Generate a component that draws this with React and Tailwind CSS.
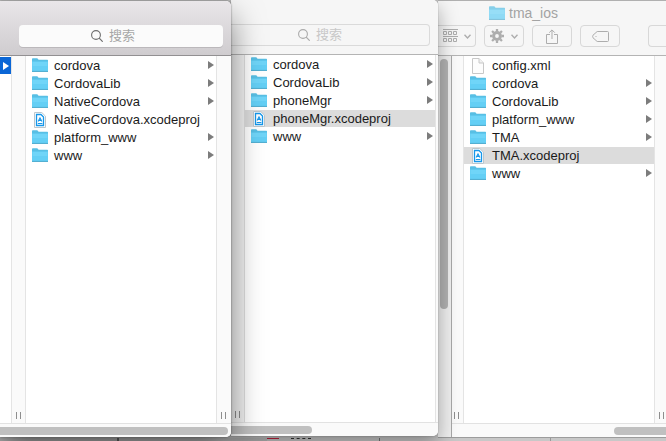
import React from "react";

function FolderIcon({ faded }) {
  return (
    <svg className={faded ? "h-[14px] w-4 shrink-0 opacity-70" : "mb-px h-[14px] w-4 shrink-0"} viewBox="0 0 16 14" aria-hidden="true">
      <path d="M0 1Q0 .3 .8 .3H5.3L6.6 1.8H15.4Q16 1.8 16 2.4V13.5H0Z" fill="#58bfe4" />
      <path d="M0 3.4H16V13H0Z" fill="#64cff5" />
      <path d="M.6 4H15.4V8H.6Z" fill="#70d5f8" />
      <path d="M0 13.4H16" stroke="#4aa9cd" strokeWidth="1" />
    </svg>
  );
}

function ProjectIcon() {
  return (
    <svg className="h-4 w-4 shrink-0" viewBox="0 0 16 16" aria-hidden="true">
      <path d="M2.5.5H9.8L13.5 4.2V15.5H2.5Z" fill="#fff" stroke="#bcc6cc" />
      <path d="M4.5 2.5H9L11.5 5V13.5H4.5Z" fill="#fff" stroke="#1697ea" strokeWidth="1.3" />
      <path d="M5.8 11.5H10.4" stroke="#1697ea" strokeWidth="1" />
      <path d="M6.1 9.5L8 5.9L9.9 9.5M6.6 8.4H9.5" fill="none" stroke="#1697ea" strokeWidth="1.1" />
    </svg>
  );
}

function PageIcon() {
  return (
    <svg className="h-4 w-4 shrink-0" viewBox="0 0 16 16" aria-hidden="true">
      <path d="M2.5.5H9L13.5 5V15.5H2.5Z" fill="#fdfdfd" stroke="#c8c8c8" />
      <path d="M9 .5V5H13.5" fill="#f2f2f2" stroke="#c8c8c8" />
    </svg>
  );
}

function Arrow({ className }) {
  return (
    <svg className={className} viewBox="0 0 6 8" aria-hidden="true">
      <path d="M0 0L6 4L0 8Z" fill="currentColor" />
    </svg>
  );
}

function FileList({ label, items, selected }) {
  return (
    <ul aria-label={label} className="w-[190px] shrink-0 pt-px">
      {items.map((name) => {
        const project = name.endsWith(".xcodeproj");
        const page = name.endsWith(".xml");
        return (
          <li key={name} className="h-[18px]">
            <button
              type="button"
              className={
                "flex h-[17px] w-full items-center pr-0.5 pl-1.5 text-left text-[13px] leading-[17px] whitespace-nowrap text-[#1a1a1a] " +
                (name === selected ? "bg-[#dcdcdc]" : "")
              }
            >
              {project ? <ProjectIcon /> : page ? <PageIcon /> : <FolderIcon />}
              <span className="ml-1.5 flex-1">{name}</span>
              {!project && !page && <Arrow className="mb-px h-2 w-1.5 text-[#7c7c7c]" />}
            </button>
          </li>
        );
      })}
    </ul>
  );
}

function Divider({ className }) {
  return (
    <div className={"flex shrink-0 items-end gap-[3px] pb-1 " + className}>
      <span className="h-[7px] w-px bg-[#8e8e8e]" />
      <span className="h-[7px] w-px bg-[#8e8e8e]" />
    </div>
  );
}

function Search({ className }) {
  return (
    <label className={"flex h-[22px] items-center gap-1.5 " + className}>
      <svg className="h-3 w-3 shrink-0" viewBox="0 0 12 12" fill="none" stroke="currentColor" aria-hidden="true">
        <circle cx="5" cy="5" r="4.4" strokeWidth="1.1" />
        <path d="M8.2 8.2L11.7 11.7" strokeWidth="1.2" />
      </svg>
      <input
        type="text"
        aria-label="搜索"
        placeholder="搜索"
        className="w-0 min-w-0 flex-1 bg-transparent text-[13px] leading-5 outline-none placeholder:text-inherit placeholder:opacity-60"
      />
    </label>
  );
}

function ToolButton({ label, className, children }) {
  return (
    <button
      type="button"
      aria-label={label}
      className={"flex h-[22px] shrink-0 items-center justify-center rounded border border-[#d8d8d8] text-[#adadad] " + className}
    >
      {children}
    </button>
  );
}

function Chevron() {
  return (
    <svg className="h-[5px] w-[7px]" viewBox="0 0 7 5" fill="none" stroke="currentColor" strokeWidth="1.4" aria-hidden="true">
      <path d="M.5 .7L3.5 3.9L6.5 .7" />
    </svg>
  );
}

function Gear() {
  return (
    <svg className="h-[14px] w-[14px]" viewBox="0 0 14 14" fill="none" stroke="currentColor" aria-hidden="true">
      <circle cx="7" cy="7" r="3.4" strokeWidth="3" />
      <path d="M7 0V2.5M7 11.5V14M0 7H2.5M11.5 7H14M2.05 2.05L3.8 3.8M10.2 10.2L11.95 11.95M2.05 11.95L3.8 10.2M10.2 3.8L11.95 2.05" strokeWidth="2.3" />
    </svg>
  );
}

export default function App() {
  return (
    <div className="flex h-screen flex-col overflow-hidden bg-[#c4c4c4] font-['Liberation_Sans','Noto_Sans_CJK_SC',sans-serif]">
      <main className="relative z-10 flex min-h-0 flex-1">
        <section
          aria-label="NativeCordova"
          className="z-20 mt-px mb-px flex w-[231px] shrink-0 flex-col rounded-r-[5px] bg-white shadow-[0_16px_32px_rgba(0,0,0,0.5),0_0_2px_rgba(0,0,0,0.55)]"
        >
          <header className="h-[55px] shrink-0 rounded-tr-[5px] border-b border-[#929092] bg-linear-to-b from-[#e9e6e9] to-[#cfcccf] pt-6 pr-2 pl-[19px]">
            <Search className="rounded bg-[#fbfbfb] pl-[72px] text-[#6e6e6e] shadow-[0_1px_0_#bbb8bb]" />
          </header>
          <div className="flex min-h-0 flex-1">
            <div className="w-[11px] shrink-0 pt-px">
              <div className="flex h-[17px] items-center bg-[#0a66d6] pl-[3px]">
                <Arrow className="h-2 w-1.5 text-white" />
              </div>
            </div>
            <Divider className="w-[15px] border-x border-[#e4e4e4] bg-[#fafafa] pl-1" />
            <FileList
              label="NativeCordova"
              items={["cordova", "CordovaLib", "NativeCordova", "NativeCordova.xcodeproj", "platform_www", "www"]}
            />
            <Divider className="flex-1 border-l border-[#e4e4e4] bg-[#fafafa] pl-1" />
          </div>
          <div className="h-[14px] shrink-0 rounded-br-[5px] border-t border-[#e2e2e2] bg-[#fafafa] pt-[3px] pr-[3px]">
            <div className="h-2 rounded-r-full bg-[#c0c0c0]" />
          </div>
        </section>

        <section
          aria-label="phoneMgr"
          className="z-10 mb-0.5 flex w-[207px] shrink-0 flex-col rounded-r-[5px] bg-white shadow-[0_8px_20px_rgba(0,0,0,0.34),0_0_1px_rgba(0,0,0,0.6)]"
        >
          <header className="h-[55px] shrink-0 rounded-tr-[5px] border-b border-[#b4b4b4] bg-[#f6f6f6] pt-6 pr-2">
            <Search className="rounded-r border border-l-0 border-[#dadada] pl-[67px] text-[#aaaaaa]" />
          </header>
          <div className="flex min-h-0 flex-1">
            <Divider className="w-[14px] border-r border-[#dedede] bg-[#f4f4f4] pl-1" />
            <FileList
              label="phoneMgr"
              selected="phoneMgr.xcodeproj"
              items={["cordova", "CordovaLib", "phoneMgr", "phoneMgr.xcodeproj", "www"]}
            />
            <div className="flex-1 border-l border-[#e4e4e4] bg-[#fafafa]" />
          </div>
          <div className="h-[14px] shrink-0 rounded-br-[5px] border-t border-[#e2e2e2] bg-[#fafafa] pt-[3px]">
            <div className="h-2 w-[81px] rounded-r-full bg-[#c0c0c0]" />
          </div>
        </section>

        <section aria-label="tma_ios" className="flex min-w-0 flex-1 flex-col overflow-hidden border-b border-[#9c9c9c] bg-white">
          <header className="h-14 shrink-0 border-y border-t-[#b0b0b0] border-b-[#b4b4b4] bg-[#f6f6f6]">
            <h1 className="flex h-6 items-center gap-1 pl-[51px] text-[14px] leading-6 text-[#a3a3a3]">
              <FolderIcon faded />
              tma_ios
            </h1>
            <div className="flex">
              <ToolButton label="Arrange" className="mr-2 w-[38px] gap-1.5 rounded-l-none border-l-0">
                <svg className="h-[14px] w-[15px]" viewBox="0 0 15 14" fill="none" stroke="currentColor" aria-hidden="true">
                  <path d="M0 .5H15M0 7.5H15" />
                  <path d="M.5 2.5H3.5V5.5H.5ZM5.5 2.5H8.5V5.5H5.5ZM10.5 2.5H13.5V5.5H10.5ZM.5 9.5H3.5V12.5H.5ZM5.5 9.5H8.5V12.5H5.5ZM10.5 9.5H13.5V12.5H10.5Z" />
                </svg>
                <Chevron />
              </ToolButton>
              <ToolButton label="Actions" className="mr-2 w-10 gap-[7px]">
                <Gear />
                <Chevron />
              </ToolButton>
              <ToolButton label="Share" className="mr-2 w-10">
                <svg className="h-[15px] w-3" viewBox="0 0 12 15" fill="none" stroke="currentColor" aria-hidden="true">
                  <path d="M4 5.5H.5V14.5H11.5V5.5H8M6 10V1M3.2 3.7L6 .9L8.8 3.7" />
                </svg>
              </ToolButton>
              <ToolButton label="Tags" className="w-10">
                <svg className="h-[11px] w-[17px]" viewBox="0 0 17 11" fill="none" stroke="currentColor" aria-hidden="true">
                  <path d="M5.2 .5H15.5Q16.5 .5 16.5 1.5V9.5Q16.5 10.5 15.5 10.5H5.2L1 6.8Q.2 5.5 1 4.2Z" />
                  <circle cx="4" cy="5.5" r=".6" fill="currentColor" stroke="none" />
                </svg>
              </ToolButton>
              <div className="ml-7 h-[22px] flex-1 rounded-l border border-r-0 border-[#d8d8d8]" />
            </div>
          </header>
          <div className="flex min-h-0 flex-1">
            <div className="w-[14px] shrink-0 border-r border-[#a8a8a8] bg-[#efefef] pt-[3px] pl-0.5">
              <div className="h-[250px] w-2 rounded-full bg-[#b2b2b2]" />
            </div>
            <div className="flex min-w-0 flex-1 flex-col">
              <div className="flex min-h-0 flex-1">
                <Divider className="w-3 border-r border-[#e4e4e4] bg-[#fafafa] pl-0.5" />
                <FileList
                  label="tma_ios"
                  selected="TMA.xcodeproj"
                  items={["config.xml", "cordova", "CordovaLib", "platform_www", "TMA", "TMA.xcodeproj", "www"]}
                />
                <Divider className="flex-1 border-l border-[#e4e4e4] bg-[#fafafa] pl-1" />
              </div>
              <div className="flex h-[14px] shrink-0 border-t border-[#e2e2e2] bg-[#fafafa] pt-[3px]">
                <div className="w-[162px] shrink-0" />
                <div className="h-2 flex-1 rounded-l-full bg-[#c0c0c0]" />
              </div>
            </div>
          </div>
        </section>
      </main>
      <div aria-hidden="true" className="flex h-[3px] shrink-0 bg-[#c8c8c8]">
        <div className="w-[117px] shrink-0 bg-[#b8b8b8]" />
        <div className="w-0.5 shrink-0 bg-[#666666]" />
        <div className="w-[148px] shrink-0 bg-[#bcbcbc]" />
        <div className="h-px w-3 shrink-0 bg-[#c0203c]" />
        <div className="ml-3 h-px w-5 shrink-0 border-t border-dashed border-[#333333]" />
        <div className="w-[68px] shrink-0" />
        <div className="w-px shrink-0 bg-[#777777]" />
        <div className="w-[170px] shrink-0" />
        <div className="w-px shrink-0 bg-[#999999]" />
      </div>
    </div>
  );
}
